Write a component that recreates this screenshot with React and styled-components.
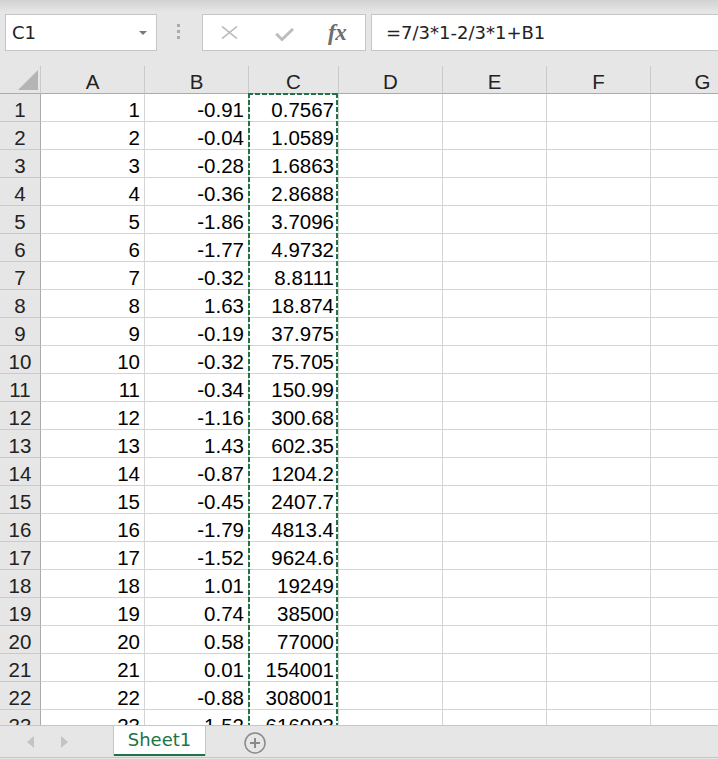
import React from 'react';
import styled, { createGlobalStyle } from 'styled-components';

const GlobalStyle = createGlobalStyle`
  html, body { margin: 0; padding: 0; background: #e6e6e6; overflow: hidden; }
  #root { height: 100vh; }
`;

const COLS = '41px 104px 104px 90px 104px 104px 104px 104px';
const GREEN = '#217346';

const Window = styled.div`
  height: 100vh;
  display: flex;
  flex-direction: column;
  background: #e6e6e6;
`;

const Toolbar = styled.div`
  flex: none;
  height: 66px;
  box-sizing: border-box;
  padding-top: 14px;
  display: flex;
  align-items: flex-start;
  background: linear-gradient(to bottom, #d2d2d2 0px, #e6e6e6 12px);
  font-family: "DejaVu Sans", sans-serif;
  font-size: 18px;
  color: #222;
`;

const NameBox = styled.div`
  margin-left: 5px;
  width: 152px;
  height: 37px;
  box-sizing: border-box;
  border: 1px solid #c6c6c6;
  background: #fff;
  display: flex;
  align-items: center;
  justify-content: space-between;
  padding: 0 9px 0 6px;
`;

const Caret = styled.span`
  width: 0;
  height: 0;
  border-left: 4px solid transparent;
  border-right: 4px solid transparent;
  border-top: 4px solid #7a7a7a;
`;

const Grip = styled.div`
  margin: 10px 0 0 20px;
  display: flex;
  flex-direction: column;
  gap: 3px;
`;

const GripDot = styled.span`
  width: 3px;
  height: 3px;
  background: #ababab;
`;

const FxBox = styled.div`
  margin-left: 22px;
  width: 164px;
  height: 37px;
  box-sizing: border-box;
  border: 1px solid #c6c6c6;
  background: #fff;
  display: flex;
  align-items: center;
  padding-left: 18px;
`;

const IconSlot = styled.span`
  display: flex;
  margin-left: ${p => p.$ml || 0}px;
  margin-top: ${p => p.$mt || 0}px;
`;

const FxText = styled.span`
  margin-left: 34px;
  font-family: "Liberation Serif", serif;
  font-style: italic;
  font-weight: bold;
  font-size: 23px;
  color: #6e6e6e;
  letter-spacing: -0.5px;
  line-height: 1;
`;

const FormulaBox = styled.div`
  flex: 1;
  margin-left: 5px;
  height: 37px;
  box-sizing: border-box;
  border: 1px solid #c6c6c6;
  border-right: none;
  background: #fff;
  display: flex;
  align-items: center;
  padding-left: 14px;
`;

const SheetArea = styled.div`
  flex: 1;
  position: relative;
  overflow: hidden;
  background: #fff;
  font-family: "Liberation Sans", Arial, sans-serif;
  font-size: 20.5px;
  color: #000;
`;

const GridRow = styled.div`
  display: grid;
  grid-template-columns: ${COLS};
  height: 28px;
`;

const HeaderCell = styled.div`
  box-sizing: border-box;
  height: 28px;
  background: #e6e6e6;
  border-right: 1px solid #cacaca;
  border-bottom: 1px solid #ababab;
  display: flex;
  justify-content: center;
  align-items: flex-end;
  line-height: 22px;
  color: #222;
`;

const Corner = styled(HeaderCell)`
  justify-content: flex-end;
  padding: 0 2px 3px 0;
`;

const CornerTriangle = styled.span`
  width: 20px;
  height: 20px;
  background: #b4b4b4;
  clip-path: polygon(100% 0, 100% 100%, 0 100%);
`;

const RowHeader = styled.div`
  box-sizing: border-box;
  height: 28px;
  background: #e6e6e6;
  border-right: 1px solid #ababab;
  border-bottom: 1px solid #cacaca;
  display: flex;
  justify-content: center;
  align-items: flex-end;
  line-height: 22px;
  color: #222;
`;

const Cell = styled.div`
  box-sizing: border-box;
  height: 28px;
  border-right: 1px solid #d4d4d4;
  border-bottom: 1px solid #d4d4d4;
  display: flex;
  justify-content: flex-end;
  align-items: flex-end;
  line-height: 22px;
  padding-right: 4px;
  white-space: nowrap;
`;

const Marquee = styled.div`
  position: absolute;
  top: 27px;
  left: 248px;
  width: 90px;
  bottom: -20px;
  pointer-events: none;
  background:
    repeating-linear-gradient(90deg, ${GREEN} 0 5px, transparent 5px 7px) top left / 100% 2px no-repeat,
    repeating-linear-gradient(180deg, ${GREEN} 0 5px, transparent 5px 7px) top left / 2px 100% no-repeat,
    repeating-linear-gradient(180deg, ${GREEN} 0 5px, transparent 5px 7px) top right / 2px 100% no-repeat;
`;

const TabBar = styled.div`
  flex: none;
  height: 33px;
  margin-bottom: 1px;
  box-sizing: border-box;
  border-top: 1px solid #c6c6c6;
  border-bottom: 1px solid #c6c6c6;
  background: #e6e6e6;
  display: flex;
  align-items: flex-start;
`;

const NavArrows = styled.div`
  width: 113px;
  height: 31px;
  box-sizing: border-box;
  padding-left: 27px;
  display: flex;
  align-items: center;
  gap: 27px;
`;

const Arrow = styled.span`
  width: 0;
  height: 0;
  border-top: 6px solid transparent;
  border-bottom: 6px solid transparent;
  ${p => (p.$dir === 'left'
    ? 'border-right: 7px solid #c4c4c4;'
    : 'border-left: 7px solid #c4c4c4;')}
`;

const SheetTab = styled.div`
  width: 93px;
  height: 30px;
  box-sizing: border-box;
  background: #fff;
  border-left: 1px solid #c6c6c6;
  border-right: 1px solid #c6c6c6;
  box-shadow: inset 0 -2px 0 ${GREEN};
  display: flex;
  align-items: center;
  justify-content: center;
  padding-bottom: 4px;
  font-family: "DejaVu Sans", sans-serif;
  font-size: 18px;
  color: ${GREEN};
`;

const AddSheet = styled.span`
  display: flex;
  margin: 6px 0 0 38px;
`;

const colsHead = ['A', 'B', 'C', 'D', 'E', 'F', 'G'];

const B = ['-0.91', '-0.04', '-0.28', '-0.36', '-1.86', '-1.77', '-0.32', '1.63', '-0.19', '-0.32', '-0.34', '-1.16', '1.43', '-0.87', '-0.45', '-1.79', '-1.52', '1.01', '0.74', '0.58', '0.01', '-0.88', '1.52'];
const C = ['0.7567', '1.0589', '1.6863', '2.8688', '3.7096', '4.9732', '8.8111', '18.874', '37.975', '75.705', '150.99', '300.68', '602.35', '1204.2', '2407.7', '4813.4', '9624.6', '19249', '38500', '77000', '154001', '308001', '616003'];

const rows = B.map((b, i) => ({ n: i + 1, a: String(i + 1), b, c: C[i] }));

export default function App() {
  return (
    <Window>
      <GlobalStyle />
      <Toolbar>
        <NameBox>
          <span>C1</span>
          <Caret />
        </NameBox>
        <Grip>
          <GripDot />
          <GripDot />
          <GripDot />
        </Grip>
        <FxBox>
          <IconSlot>
            <svg width="17" height="13" viewBox="0 0 17 13">
              <path d="M1 0.5 L16 12.5 M16 0.5 L1 12.5" stroke="#b8b8b8" strokeWidth="1.6" fill="none" />
            </svg>
          </IconSlot>
          <IconSlot $ml={37} $mt={3}>
            <svg width="19" height="13" viewBox="0 0 19 13">
              <polyline points="1.2,5.8 7,11.5 18,1" stroke="#bdbdbd" strokeWidth="3" fill="none" />
            </svg>
          </IconSlot>
          <FxText>fx</FxText>
        </FxBox>
        <FormulaBox>=7/3*1-2/3*1+B1</FormulaBox>
      </Toolbar>

      <SheetArea>
        <GridRow>
          <Corner>
            <CornerTriangle />
          </Corner>
          {colsHead.map(c => (
            <HeaderCell key={c}>{c}</HeaderCell>
          ))}
        </GridRow>
        {rows.map(r => (
          <GridRow key={r.n}>
            <RowHeader>{r.n}</RowHeader>
            <Cell>{r.a}</Cell>
            <Cell>{r.b}</Cell>
            <Cell>{r.c}</Cell>
            <Cell />
            <Cell />
            <Cell />
            <Cell />
          </GridRow>
        ))}
        <Marquee />
      </SheetArea>

      <TabBar>
        <NavArrows>
          <Arrow $dir="left" />
          <Arrow $dir="right" />
        </NavArrows>
        <SheetTab>Sheet1</SheetTab>
        <AddSheet>
          <svg width="22" height="22" viewBox="0 0 22 22">
            <circle cx="11" cy="11" r="10" stroke="#8a8a8a" strokeWidth="1.5" fill="none" />
            <path d="M6 11 H16 M11 6 V16" stroke="#8a8a8a" strokeWidth="2" fill="none" />
          </svg>
        </AddSheet>
      </TabBar>
    </Window>
  );
}
